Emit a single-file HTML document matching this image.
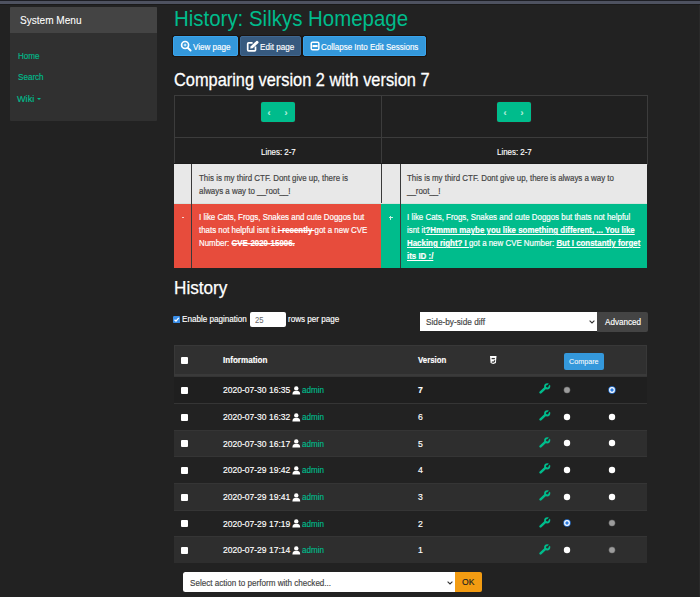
<!DOCTYPE html>
<html><head><meta charset="utf-8">
<style>
*{box-sizing:border-box;margin:0;padding:0}
html,body{width:700px;height:597px;overflow:hidden;background:#222;font-family:"Liberation Sans",sans-serif;color:#fff}
.abs{position:absolute}
.t{position:absolute;white-space:nowrap;line-height:1;transform-origin:0 0;-webkit-text-stroke:0.16px currentColor}
.strike{text-decoration:line-through;font-weight:bold;letter-spacing:0px}
.ul{text-decoration:underline;font-weight:bold;letter-spacing:0px}
.chk{position:absolute;width:7px;height:7px;background:#fff;border-radius:1px}
.row{position:absolute;left:174px;width:473px;border-top:1px solid #353535}
.radio{position:absolute;width:6px;height:6px;border-radius:50%;background:#fff}
</style></head><body>
<div class="abs" style="left:0px;top:0px;width:700px;height:1px;background:#1d1e24"></div>
<div class="abs" style="left:0px;top:1px;width:700px;height:2.6px;background:#4e5260"></div>
<div class="abs" style="left:0px;top:3.6px;width:700px;height:1.4px;background:#1a1a1a"></div>
<div class="abs" style="left:699px;top:5px;width:1px;height:592px;background:#292929"></div>
<div class="abs" style="left:10px;top:7px;width:146.8px;height:113.5px;background:#303030;border-radius:1px"></div>
<div class="abs" style="left:10px;top:7px;width:146.8px;height:26px;background:#444;border-radius:1px 1px 0 0"></div>
<div class="t" style="left:19.5px;top:14.82px;font-size:10.6px;transform:scaleX(0.9500);-webkit-text-stroke:0.08px #fff">System Menu</div>
<div class="t" style="left:18px;top:51.59px;font-size:9.1px;color:#00bc8c;transform:scaleX(0.8891)">Home</div>
<div class="t" style="left:18px;top:72.89px;font-size:9.1px;color:#00bc8c;transform:scaleX(0.8891)">Search</div>
<div class="t" style="left:17.3px;top:95.29px;font-size:9.1px;color:#00bc8c;transform:scaleX(1.0038)">Wiki</div>
<div class="abs" style="left:36.8px;top:98px;width:0;height:0;border-left:2.5px solid transparent;border-right:2.5px solid transparent;border-top:2.8px solid #00bc8c"></div>
<div class="t" style="left:174px;top:8.46px;font-size:22.6px;color:#00bc8c;transform:scaleX(0.9050);-webkit-text-stroke:0">History: Silkys Homepage</div>
<div class="abs" style="left:173px;top:35.5px;width:65px;height:20.4px;background:#3498db;border-radius:2px;border:1px solid #3aa4ec;box-shadow:0 0 0 1px #1b1410"></div>
<div class="abs" style="left:240px;top:35.5px;width:61px;height:20.4px;background:#375a7f;border-radius:2px;border:1px solid #3f6790;box-shadow:0 0 0 1px #1b1410"></div>
<div class="abs" style="left:303px;top:35.5px;width:123px;height:20.4px;background:#3498db;border-radius:2px;border:1px solid #3aa4ec;box-shadow:0 0 0 1px #1b1410"></div>
<svg class="abs" style="left:179px;top:39px" width="14" height="14" viewBox="0 0 14 14"><circle cx="6.1" cy="6" r="3.5" fill="none" stroke="#fff" stroke-width="1.7"/><path d="M8.7 8.7 L11.6 11.5" stroke="#fff" stroke-width="1.9" stroke-linecap="round"/><path d="M6.1 4.6 V7.4 M4.7 6 H7.5" stroke="#fff" stroke-width="0.9"/></svg>
<svg class="abs" style="left:246px;top:40px" width="14" height="13" viewBox="0 0 14 13"><path d="M6.6 2.8 H2.6 Q1.7 2.8 1.7 3.7 V9.9 Q1.7 10.8 2.6 10.8 H8.6 Q9.5 10.8 9.5 9.9 V6.6" fill="none" stroke="#fff" stroke-width="1.7"/><path d="M4.2 8.6 L4.6 6.4 L10.4 0.9 Q11 0.4 11.6 0.9 L12.4 1.7 Q12.9 2.3 12.4 2.9 L6.6 8.3 Z" fill="#fff"/></svg>
<svg class="abs" style="left:309.5px;top:41px" width="10" height="10" viewBox="0 0 10 10"><rect x="1.25" y="1.25" width="7.6" height="7.6" rx="1.3" fill="none" stroke="#fff" stroke-width="1.5"/><rect x="2.5" y="4.0" width="5.1" height="2.1" fill="#fff"/></svg>
<div class="t" style="left:193px;top:43.19px;font-size:9.1px;transform:scaleX(0.8891)">View page</div>
<div class="t" style="left:260px;top:43.19px;font-size:9.1px;transform:scaleX(0.8891)">Edit page</div>
<div class="t" style="left:320.8px;top:43.19px;font-size:9.1px;transform:scaleX(0.8796)">Collapse Into Edit Sessions</div>
<div class="t" style="left:173.5px;top:71.15px;font-size:18.6px;transform:scaleX(0.8800);-webkit-text-stroke:0;-webkit-text-stroke:0.3px #fff">Comparing version 2 with version 7</div>
<div class="abs" style="left:174px;top:95px;width:474px;height:69px;background:#202020"></div>
<div class="abs" style="left:174px;top:95px;width:474px;height:1px;background:#3c3c3c"></div>
<div class="abs" style="left:174px;top:95px;width:1px;height:70px;background:#3c3c3c"></div>
<div class="abs" style="left:647px;top:95px;width:1px;height:70px;background:#3c3c3c"></div>
<div class="abs" style="left:174px;top:137px;width:474px;height:1px;background:#3c3c3c"></div>
<div class="abs" style="left:381px;top:95px;width:1px;height:70px;background:#3c3c3c"></div>
<div class="abs" style="left:261px;top:102px;width:34px;height:20px;background:#00bc8c;border-radius:2px;box-shadow:0 0 0 0.5px #3a1e22"></div>
<div class="t" style="left:267.5px;top:108.88px;font-size:9px;color:#b9eedc;font-weight:bold">&#8249;</div>
<div class="t" style="left:284.5px;top:108.88px;font-size:9px;color:#b9eedc;font-weight:bold">&#8250;</div>
<div class="abs" style="left:497px;top:102px;width:34px;height:20px;background:#00bc8c;border-radius:2px;box-shadow:0 0 0 0.5px #3a1e22"></div>
<div class="t" style="left:503.5px;top:108.88px;font-size:9px;color:#b9eedc;font-weight:bold">&#8249;</div>
<div class="t" style="left:520.5px;top:108.88px;font-size:9px;color:#b9eedc;font-weight:bold">&#8250;</div>
<div class="t" style="left:260.5px;top:147.69px;font-size:9.1px;transform:scaleX(0.8700)">Lines: 2-7</div>
<div class="t" style="left:496.8px;top:147.69px;font-size:9.1px;transform:scaleX(0.8700)">Lines: 2-7</div>
<div class="abs" style="left:174px;top:162.6px;width:473px;height:1.6px;background:#1b1b1b"></div>
<div class="abs" style="left:174px;top:164.2px;width:473px;height:38.8px;background:#e8e8e8"></div>
<div class="abs" style="left:174px;top:203px;width:473px;height:1px;background:#d6e3de"></div>
<div class="abs" style="left:174px;top:204px;width:207px;height:64px;background:#e74c3c"></div>
<div class="abs" style="left:381px;top:204px;width:266px;height:64px;background:#00bc8c"></div>
<div class="abs" style="left:191px;top:164px;width:1px;height:104px;background:#3a3a3a"></div>
<div class="abs" style="left:399.5px;top:164px;width:1px;height:104px;background:#3a3a3a"></div>
<div class="abs" style="left:381px;top:164px;width:1px;height:39px;background:#3a3a3a"></div>
<div style="position:absolute;font-size:9.6px;line-height:13px;transform-origin:0 0;transform:scaleX(0.824);-webkit-text-stroke:0.2px currentColor;left:199px;top:170.8px;width:211.2px;color:#444">This is my third CTF. Dont give up, there is always a way to __root__!</div>
<div style="position:absolute;font-size:9.6px;line-height:13px;transform-origin:0 0;transform:scaleX(0.824);-webkit-text-stroke:0.2px currentColor;left:406.8px;top:170.8px;width:285.2px;color:#444">This is my third CTF. Dont give up, there is always a way to __root__!</div>
<div class="abs" style="left:182px;top:217px;width:2px;height:1.4px;background:#f6d0cb"></div>
<div class="abs" style="left:388.6px;top:217.1px;width:4px;height:1.2px;background:#c8f2e4"></div>
<div class="abs" style="left:390px;top:215.7px;width:1.2px;height:4px;background:#c8f2e4"></div>
<div style="position:absolute;font-size:9.6px;line-height:13px;transform-origin:0 0;transform:scaleX(0.824);-webkit-text-stroke:0.2px currentColor;left:199px;top:210.3px;width:211.2px;color:#fff">I like Cats, Frogs, Snakes and cute Doggos but thats not helpful isnt it.<span class="strike">i recently </span>got a new CVE Number: <span class="strike">CVE-2020-15906.</span></div>
<div style="position:absolute;font-size:9.6px;line-height:13px;transform-origin:0 0;transform:scaleX(0.824);-webkit-text-stroke:0.2px currentColor;left:406.8px;top:210.3px;width:285.2px;color:#fff">I like Cats, Frogs, Snakes and cute Doggos but thats not helpful isnt it<span class="ul">?Hmmm maybe you like something different, ... You like Hacking right? I </span>got a new CVE Number: <span class="ul">But I constantly forget its ID :/</span></div>
<div class="t" style="left:173.6px;top:279.78px;font-size:17.5px;transform:scaleX(0.9800);-webkit-text-stroke:0;-webkit-text-stroke:0.25px #fff">History</div>
<svg class="abs" style="left:173.2px;top:316px" width="7.2" height="7.2" viewBox="0 0 7.2 7.2"><rect width="7.2" height="7.2" rx="1.2" fill="#3a8ee8"/><path d="M1.5 3.7 L3 5.1 L5.8 1.8" fill="none" stroke="#fff" stroke-width="1.3"/></svg>
<div class="t" style="left:182px;top:315.19px;font-size:9.1px;transform:scaleX(0.8891)">Enable pagination</div>
<div class="abs" style="left:250px;top:311.5px;width:36px;height:15.5px;background:#fff;border-radius:2px"></div>
<div class="t" style="left:254.5px;top:315.69px;font-size:8.4px;color:#666;transform:scaleX(0.9200);-webkit-text-stroke:0">25</div>
<div class="t" style="left:287.6px;top:315.29px;font-size:9.1px;transform:scaleX(0.8891)">rows per page</div>
<div class="abs" style="left:419.5px;top:312px;width:177.5px;height:19px;background:#fff"></div>
<div class="t" style="left:426px;top:318.06px;font-size:8.9px;color:#444;transform:scaleX(0.9300)">Side-by-side diff</div>
<svg class="abs" style="left:589px;top:320px" width="6" height="4" viewBox="0 0 6 4"><path d="M0.6 0.7 L3 3 L5.4 0.7" fill="none" stroke="#333" stroke-width="1.1"/></svg>
<div class="abs" style="left:597px;top:311.5px;width:51px;height:20px;background:#444;border-radius:0 2px 2px 0"></div>
<div class="t" style="left:604.5px;top:317.69px;font-size:9.1px;transform:scaleX(0.8891)">Advanced</div>
<div class="abs" style="left:174px;top:345px;width:473px;height:29px;background:#303030;border:1px solid #383838;border-bottom:none"></div>
<div class="abs" style="left:174px;top:374px;width:473px;height:2px;background:#3a3a3a"></div>
<div class="abs" style="left:181px;top:357px;width:7px;height:7px;background:#fff;border-radius:1px"></div>
<div class="t" style="left:223px;top:355.59px;font-size:9.1px;font-weight:bold;transform:scaleX(0.8891)">Information</div>
<div class="t" style="left:418px;top:356.29px;font-size:9.1px;font-weight:bold;transform:scaleX(0.8604)">Version</div>
<svg class="abs" style="left:489.7px;top:355.9px" width="7" height="9" viewBox="0 0 7 9"><path d="M0 0 H6.5 L5.9 6.9 L3.25 8 L0.6 6.9 Z" fill="#fff"/><path d="M1.6 2.6 H4.9" stroke="#333" stroke-width="1.3"/><path d="M4.6 4.3 Q4.6 6.2 3.3 6.2 Q2.4 6.2 2 5.6" fill="none" stroke="#333" stroke-width="1.3"/></svg>
<div class="abs" style="left:564px;top:353px;width:40px;height:17px;background:#3498db;border-radius:2px"></div>
<div class="t" style="left:568.8px;top:358.42px;font-size:8.0px;transform:scaleX(0.9000);-webkit-text-stroke:0.05px #fff">Compare</div>
<div class="row" style="top:376.3px;height:26.68px;background:#1f1f1f"></div>
<div class="chk" style="left:181px;top:386.9px"></div>
<div class="t" style="left:223px;top:386.19px;font-size:9.1px;transform:scaleX(0.9369)">2020-07-30 16:35</div>
<svg class="abs" style="left:291.6px;top:386.0px" width="9" height="9" viewBox="0 0 9 9"><circle cx="4.3" cy="2.4" r="2.2" fill="#fff"/><path d="M0.4 8.4 C0.4 5.6 1.8 4.9 2.6 4.9 L6 4.9 C6.8 4.9 8.2 5.6 8.2 8.4 Z" fill="#fff"/></svg>
<div class="t" style="left:302px;top:386.19px;font-size:9.1px;color:#00bc8c;transform:scaleX(0.8891)">admin</div>
<div class="t" style="left:418px;top:386.19px;font-size:9.1px;font-weight:bold;transform:scaleX(0.9560)">7</div>
<svg class="abs" style="left:539px;top:383.4px" width="12" height="12" viewBox="0 0 12 12"><path d="M1.6 9.4 L6.4 4.9" stroke="#00bc8c" stroke-width="2.5" stroke-linecap="round"/><circle cx="8.2" cy="3.3" r="2.2" fill="none" stroke="#00bc8c" stroke-width="1.8"/><path d="M8.5 3.0 L11.5 0" stroke="#1f1f1f" stroke-width="1.5"/></svg>
<svg class="abs" style="left:561.80px;top:385.00px" width="10" height="10" viewBox="0 0 10 10"><circle cx="5" cy="5" r="3.1" fill="#9c9c9c" stroke="#6a6a6a" stroke-width="0.5"/></svg>
<svg class="abs" style="left:607.40px;top:385.00px" width="10" height="10" viewBox="0 0 10 10"><circle cx="5" cy="5" r="3.7" fill="#2a7be0"/><circle cx="5" cy="5" r="2.9" fill="#fff"/><circle cx="5" cy="5" r="1.7" fill="#2a7be0"/></svg>
<div class="row" style="top:402.98px;height:26.68px;background:#222"></div>
<div class="chk" style="left:181px;top:413.6px"></div>
<div class="t" style="left:223px;top:412.87px;font-size:9.1px;transform:scaleX(0.9369)">2020-07-30 16:32</div>
<svg class="abs" style="left:291.6px;top:412.7px" width="9" height="9" viewBox="0 0 9 9"><circle cx="4.3" cy="2.4" r="2.2" fill="#fff"/><path d="M0.4 8.4 C0.4 5.6 1.8 4.9 2.6 4.9 L6 4.9 C6.8 4.9 8.2 5.6 8.2 8.4 Z" fill="#fff"/></svg>
<div class="t" style="left:302px;top:412.87px;font-size:9.1px;color:#00bc8c;transform:scaleX(0.8891)">admin</div>
<div class="t" style="left:418px;top:412.87px;font-size:9.1px;transform:scaleX(0.9560)">6</div>
<svg class="abs" style="left:539px;top:410.1px" width="12" height="12" viewBox="0 0 12 12"><path d="M1.6 9.4 L6.4 4.9" stroke="#00bc8c" stroke-width="2.5" stroke-linecap="round"/><circle cx="8.2" cy="3.3" r="2.2" fill="none" stroke="#00bc8c" stroke-width="1.8"/><path d="M8.5 3.0 L11.5 0" stroke="#222" stroke-width="1.5"/></svg>
<svg class="abs" style="left:561.80px;top:411.68px" width="10" height="10" viewBox="0 0 10 10"><circle cx="5" cy="5" r="3.2" fill="#fff"/></svg>
<svg class="abs" style="left:607.40px;top:411.68px" width="10" height="10" viewBox="0 0 10 10"><circle cx="5" cy="5" r="3.2" fill="#fff"/></svg>
<div class="row" style="top:429.66px;height:26.68px;background:#2e2e2e"></div>
<div class="chk" style="left:181px;top:440.3px"></div>
<div class="t" style="left:223px;top:439.55px;font-size:9.1px;transform:scaleX(0.9369)">2020-07-30 16:17</div>
<svg class="abs" style="left:291.6px;top:439.4px" width="9" height="9" viewBox="0 0 9 9"><circle cx="4.3" cy="2.4" r="2.2" fill="#fff"/><path d="M0.4 8.4 C0.4 5.6 1.8 4.9 2.6 4.9 L6 4.9 C6.8 4.9 8.2 5.6 8.2 8.4 Z" fill="#fff"/></svg>
<div class="t" style="left:302px;top:439.55px;font-size:9.1px;color:#00bc8c;transform:scaleX(0.8891)">admin</div>
<div class="t" style="left:418px;top:439.55px;font-size:9.1px;transform:scaleX(0.9560)">5</div>
<svg class="abs" style="left:539px;top:436.8px" width="12" height="12" viewBox="0 0 12 12"><path d="M1.6 9.4 L6.4 4.9" stroke="#00bc8c" stroke-width="2.5" stroke-linecap="round"/><circle cx="8.2" cy="3.3" r="2.2" fill="none" stroke="#00bc8c" stroke-width="1.8"/><path d="M8.5 3.0 L11.5 0" stroke="#2e2e2e" stroke-width="1.5"/></svg>
<svg class="abs" style="left:561.80px;top:438.36px" width="10" height="10" viewBox="0 0 10 10"><circle cx="5" cy="5" r="3.2" fill="#fff"/></svg>
<svg class="abs" style="left:607.40px;top:438.36px" width="10" height="10" viewBox="0 0 10 10"><circle cx="5" cy="5" r="3.2" fill="#fff"/></svg>
<div class="row" style="top:456.34000000000003px;height:26.68px;background:#222"></div>
<div class="chk" style="left:181px;top:466.9px"></div>
<div class="t" style="left:223px;top:466.23px;font-size:9.1px;transform:scaleX(0.9369)">2020-07-29 19:42</div>
<svg class="abs" style="left:291.6px;top:466.0px" width="9" height="9" viewBox="0 0 9 9"><circle cx="4.3" cy="2.4" r="2.2" fill="#fff"/><path d="M0.4 8.4 C0.4 5.6 1.8 4.9 2.6 4.9 L6 4.9 C6.8 4.9 8.2 5.6 8.2 8.4 Z" fill="#fff"/></svg>
<div class="t" style="left:302px;top:466.23px;font-size:9.1px;color:#00bc8c;transform:scaleX(0.8891)">admin</div>
<div class="t" style="left:418px;top:466.23px;font-size:9.1px;transform:scaleX(0.9560)">4</div>
<svg class="abs" style="left:539px;top:463.4px" width="12" height="12" viewBox="0 0 12 12"><path d="M1.6 9.4 L6.4 4.9" stroke="#00bc8c" stroke-width="2.5" stroke-linecap="round"/><circle cx="8.2" cy="3.3" r="2.2" fill="none" stroke="#00bc8c" stroke-width="1.8"/><path d="M8.5 3.0 L11.5 0" stroke="#222" stroke-width="1.5"/></svg>
<svg class="abs" style="left:561.80px;top:465.04px" width="10" height="10" viewBox="0 0 10 10"><circle cx="5" cy="5" r="3.2" fill="#fff"/></svg>
<svg class="abs" style="left:607.40px;top:465.04px" width="10" height="10" viewBox="0 0 10 10"><circle cx="5" cy="5" r="3.2" fill="#fff"/></svg>
<div class="row" style="top:483.02px;height:26.68px;background:#2e2e2e"></div>
<div class="chk" style="left:181px;top:493.6px"></div>
<div class="t" style="left:223px;top:492.91px;font-size:9.1px;transform:scaleX(0.9369)">2020-07-29 19:41</div>
<svg class="abs" style="left:291.6px;top:492.7px" width="9" height="9" viewBox="0 0 9 9"><circle cx="4.3" cy="2.4" r="2.2" fill="#fff"/><path d="M0.4 8.4 C0.4 5.6 1.8 4.9 2.6 4.9 L6 4.9 C6.8 4.9 8.2 5.6 8.2 8.4 Z" fill="#fff"/></svg>
<div class="t" style="left:302px;top:492.91px;font-size:9.1px;color:#00bc8c;transform:scaleX(0.8891)">admin</div>
<div class="t" style="left:418px;top:492.91px;font-size:9.1px;transform:scaleX(0.9560)">3</div>
<svg class="abs" style="left:539px;top:490.1px" width="12" height="12" viewBox="0 0 12 12"><path d="M1.6 9.4 L6.4 4.9" stroke="#00bc8c" stroke-width="2.5" stroke-linecap="round"/><circle cx="8.2" cy="3.3" r="2.2" fill="none" stroke="#00bc8c" stroke-width="1.8"/><path d="M8.5 3.0 L11.5 0" stroke="#2e2e2e" stroke-width="1.5"/></svg>
<svg class="abs" style="left:561.80px;top:491.72px" width="10" height="10" viewBox="0 0 10 10"><circle cx="5" cy="5" r="3.2" fill="#fff"/></svg>
<svg class="abs" style="left:607.40px;top:491.72px" width="10" height="10" viewBox="0 0 10 10"><circle cx="5" cy="5" r="3.2" fill="#fff"/></svg>
<div class="row" style="top:509.70000000000005px;height:26.68px;background:#222"></div>
<div class="chk" style="left:181px;top:520.3px"></div>
<div class="t" style="left:223px;top:519.59px;font-size:9.1px;transform:scaleX(0.9369)">2020-07-29 17:19</div>
<svg class="abs" style="left:291.6px;top:519.4px" width="9" height="9" viewBox="0 0 9 9"><circle cx="4.3" cy="2.4" r="2.2" fill="#fff"/><path d="M0.4 8.4 C0.4 5.6 1.8 4.9 2.6 4.9 L6 4.9 C6.8 4.9 8.2 5.6 8.2 8.4 Z" fill="#fff"/></svg>
<div class="t" style="left:302px;top:519.59px;font-size:9.1px;color:#00bc8c;transform:scaleX(0.8891)">admin</div>
<div class="t" style="left:418px;top:519.59px;font-size:9.1px;transform:scaleX(0.9560)">2</div>
<svg class="abs" style="left:539px;top:516.8px" width="12" height="12" viewBox="0 0 12 12"><path d="M1.6 9.4 L6.4 4.9" stroke="#00bc8c" stroke-width="2.5" stroke-linecap="round"/><circle cx="8.2" cy="3.3" r="2.2" fill="none" stroke="#00bc8c" stroke-width="1.8"/><path d="M8.5 3.0 L11.5 0" stroke="#222" stroke-width="1.5"/></svg>
<svg class="abs" style="left:561.80px;top:518.40px" width="10" height="10" viewBox="0 0 10 10"><circle cx="5" cy="5" r="3.7" fill="#2a7be0"/><circle cx="5" cy="5" r="2.9" fill="#fff"/><circle cx="5" cy="5" r="1.7" fill="#2a7be0"/></svg>
<svg class="abs" style="left:607.40px;top:518.40px" width="10" height="10" viewBox="0 0 10 10"><circle cx="5" cy="5" r="3.1" fill="#9c9c9c" stroke="#6a6a6a" stroke-width="0.5"/></svg>
<div class="row" style="top:536.38px;height:26.68px;background:#2e2e2e"></div>
<div class="chk" style="left:181px;top:547.0px"></div>
<div class="t" style="left:223px;top:546.27px;font-size:9.1px;transform:scaleX(0.9369)">2020-07-29 17:14</div>
<svg class="abs" style="left:291.6px;top:546.1px" width="9" height="9" viewBox="0 0 9 9"><circle cx="4.3" cy="2.4" r="2.2" fill="#fff"/><path d="M0.4 8.4 C0.4 5.6 1.8 4.9 2.6 4.9 L6 4.9 C6.8 4.9 8.2 5.6 8.2 8.4 Z" fill="#fff"/></svg>
<div class="t" style="left:302px;top:546.27px;font-size:9.1px;color:#00bc8c;transform:scaleX(0.8891)">admin</div>
<div class="t" style="left:418px;top:546.27px;font-size:9.1px;transform:scaleX(0.9560)">1</div>
<svg class="abs" style="left:539px;top:543.5px" width="12" height="12" viewBox="0 0 12 12"><path d="M1.6 9.4 L6.4 4.9" stroke="#00bc8c" stroke-width="2.5" stroke-linecap="round"/><circle cx="8.2" cy="3.3" r="2.2" fill="none" stroke="#00bc8c" stroke-width="1.8"/><path d="M8.5 3.0 L11.5 0" stroke="#2e2e2e" stroke-width="1.5"/></svg>
<svg class="abs" style="left:561.80px;top:545.08px" width="10" height="10" viewBox="0 0 10 10"><circle cx="5" cy="5" r="3.2" fill="#fff"/></svg>
<svg class="abs" style="left:607.40px;top:545.08px" width="10" height="10" viewBox="0 0 10 10"><circle cx="5" cy="5" r="3.1" fill="#9c9c9c" stroke="#6a6a6a" stroke-width="0.5"/></svg>
<div class="abs" style="left:182.5px;top:572px;width:272.5px;height:19.7px;background:#fff;border-radius:2.5px 0 0 2.5px"></div>
<div class="t" style="left:189.6px;top:578.79px;font-size:9.1px;color:#444;transform:scaleX(0.8891)">Select action to perform with checked...</div>
<svg class="abs" style="left:446.5px;top:580.5px" width="6" height="4" viewBox="0 0 6 4"><path d="M0.6 0.7 L3 3 L5.4 0.7" fill="none" stroke="#333" stroke-width="1.1"/></svg>
<div class="abs" style="left:455px;top:571.5px;width:27px;height:20.5px;background:#f39c12;border-radius:0 2px 2px 0"></div>
<div class="t" style="left:462px;top:578.08px;font-size:9px;color:#222;transform:scaleX(0.9500)">OK</div>
</body></html>
